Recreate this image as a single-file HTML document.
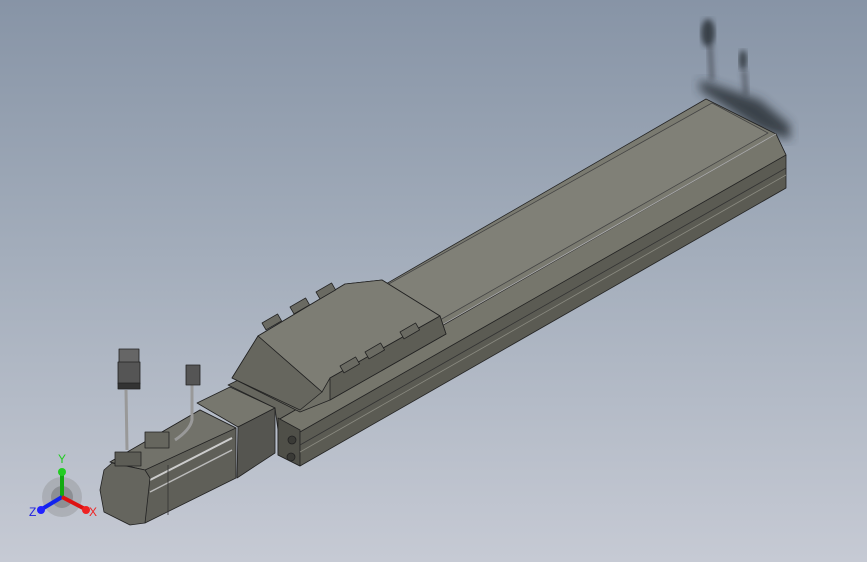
<!DOCTYPE html>
<html><head><meta charset="utf-8"><style>
html,body{margin:0;padding:0}
body{width:867px;height:562px;overflow:hidden;background:linear-gradient(180deg,#8794a6 0%,#a3adbb 45%,#c6cad4 100%);font-family:"Liberation Sans",sans-serif}
svg{position:absolute;left:0;top:0}
</style></head><body>
<svg width="867" height="562" viewBox="0 0 867 562">
<defs><filter id="bl"><feGaussianBlur stdDeviation="5"/></filter><filter id="bl2"><feGaussianBlur stdDeviation="3"/></filter></defs>
<g fill="#2c3038" opacity="0.85">
<ellipse cx="708" cy="33" rx="7" ry="14" filter="url(#bl2)"/>
<ellipse cx="743" cy="60" rx="4" ry="10" filter="url(#bl2)"/>
<path d="M700 80 L760 100 L790 125 L790 140 L760 130 L700 90Z" filter="url(#bl)"/>
</g>
<path d="M710 45 L712 80 M744 70 L746 95" stroke="#3a3e46" stroke-width="3" filter="url(#bl2)"/>
<g stroke="#222" stroke-width="0.8" stroke-linejoin="round">
<!-- connector between flange and rail -->
<polygon points="228,385 255,372 300,398 300,420 278,430 275,408" fill="#66665e"/>
<!-- rail body -->
<polygon points="776,134 786,155 786,188 300,466 278,455 278,420" fill="#5b5b53"/>
<polygon points="776,134 786,155 300,432 278,420" fill="#76766c"/>
<polygon points="278,418 300,430 300,466 278,455" fill="#4f4f48"/>
<line x1="300" y1="445" x2="786" y2="168" stroke="#333"/>
<line x1="300" y1="452" x2="786" y2="175" stroke="#8a8a80"/>
<circle cx="292" cy="440" r="4" fill="#3a3a36"/>
<circle cx="291" cy="457" r="4" fill="#3a3a36"/>
<!-- top cover -->
<polygon points="706,99 776,134 440,326 372,292" fill="#7a7a70"/>
<polygon points="712,103 768,133 440,320 378,290" fill="#808077" stroke="#444"/>
<line x1="440" y1="326" x2="776" y2="134" stroke="#aaa" stroke-width="1"/>
<!-- carriage -->
<polygon points="232,378 258,336 345,284 382,280 440,316 446,334 330,400 300,412" fill="#6f6f66"/>
<polygon points="258,336 345,284 382,280 440,316 330,378 322,392" fill="#7d7d74"/>
<polygon points="232,378 258,336 322,392 300,410" fill="#66665e"/>
<polygon points="330,378 440,316 446,334 330,400" fill="#5d5d55"/>
<g fill="#6a6a62"><rect x="262" y="323" width="18" height="8" transform="rotate(-30 262 323)"/>
<rect x="290" y="307" width="18" height="8" transform="rotate(-30 290 307)"/>
<rect x="316" y="292" width="18" height="8" transform="rotate(-30 316 292)"/>
<rect x="400" y="332" width="18" height="8" transform="rotate(-30 400 332)"/>
<rect x="365" y="352" width="18" height="8" transform="rotate(-30 365 352)"/>
<rect x="340" y="366" width="18" height="8" transform="rotate(-30 340 366)"/></g>
<!-- motor body -->
<polygon points="110,462 200,410 236,428 236,478 145,523 135,470" fill="#5f5f58"/>
<polygon points="110,462 200,410 236,428 145,470" fill="#72726a"/>
<line x1="150" y1="480" x2="232" y2="438" stroke="#ccc" stroke-width="2"/>
<line x1="150" y1="492" x2="232" y2="450" stroke="#bbb" stroke-width="1.5"/>
<line x1="168" y1="465" x2="168" y2="515" stroke="#333"/>
<polygon points="104,470 112,463 145,470 150,478 145,523 130,525 104,512 100,490" fill="#65655e"/>
<!-- flange block -->
<polygon points="197,403 230,387 275,408 238,427" fill="#77776e"/>
<polygon points="238,427 275,408 275,453 237,478" fill="#555550"/>
<!-- connectors -->
<rect x="115" y="452" width="26" height="14" fill="#5d5d56"/>
<rect x="145" y="432" width="24" height="16" fill="#66665e"/>
<line x1="126" y1="390" x2="127" y2="450" stroke="#999" stroke-width="3"/>
<rect x="119" y="349" width="20" height="14" fill="#666"/>
<rect x="118" y="362" width="22" height="22" fill="#555"/>
<rect x="118" y="383" width="22" height="6" fill="#333"/>
<path d="M192 385 L192 420 Q190 430 175 440" fill="none" stroke="#999" stroke-width="3"/>
<rect x="186" y="365" width="14" height="20" fill="#555"/>
</g>
<circle cx="62" cy="497" r="20" fill="#888" opacity="0.35"/>
<circle cx="62" cy="497" r="11" fill="#555" opacity="0.35"/>
<line x1="62" y1="497" x2="62" y2="472" stroke="#1a1" stroke-width="4"/>
<circle cx="62" cy="472" r="4" fill="#2c2"/>
<line x1="62" y1="497" x2="42" y2="509" stroke="#12e" stroke-width="4"/>
<circle cx="41" cy="510" r="4" fill="#22f"/>
<line x1="62" y1="497" x2="85" y2="509" stroke="#d11" stroke-width="4"/>
<circle cx="86" cy="510" r="4" fill="#e22"/>
<text x="58" y="463" fill="#2c2" font-size="12" font-family="Liberation Sans">Y</text>
<text x="29" y="516" fill="#22d" font-size="12" font-family="Liberation Sans">Z</text>
<text x="89" y="516" fill="#e22" font-size="12" font-family="Liberation Sans">X</text>
</svg>
</body></html>
